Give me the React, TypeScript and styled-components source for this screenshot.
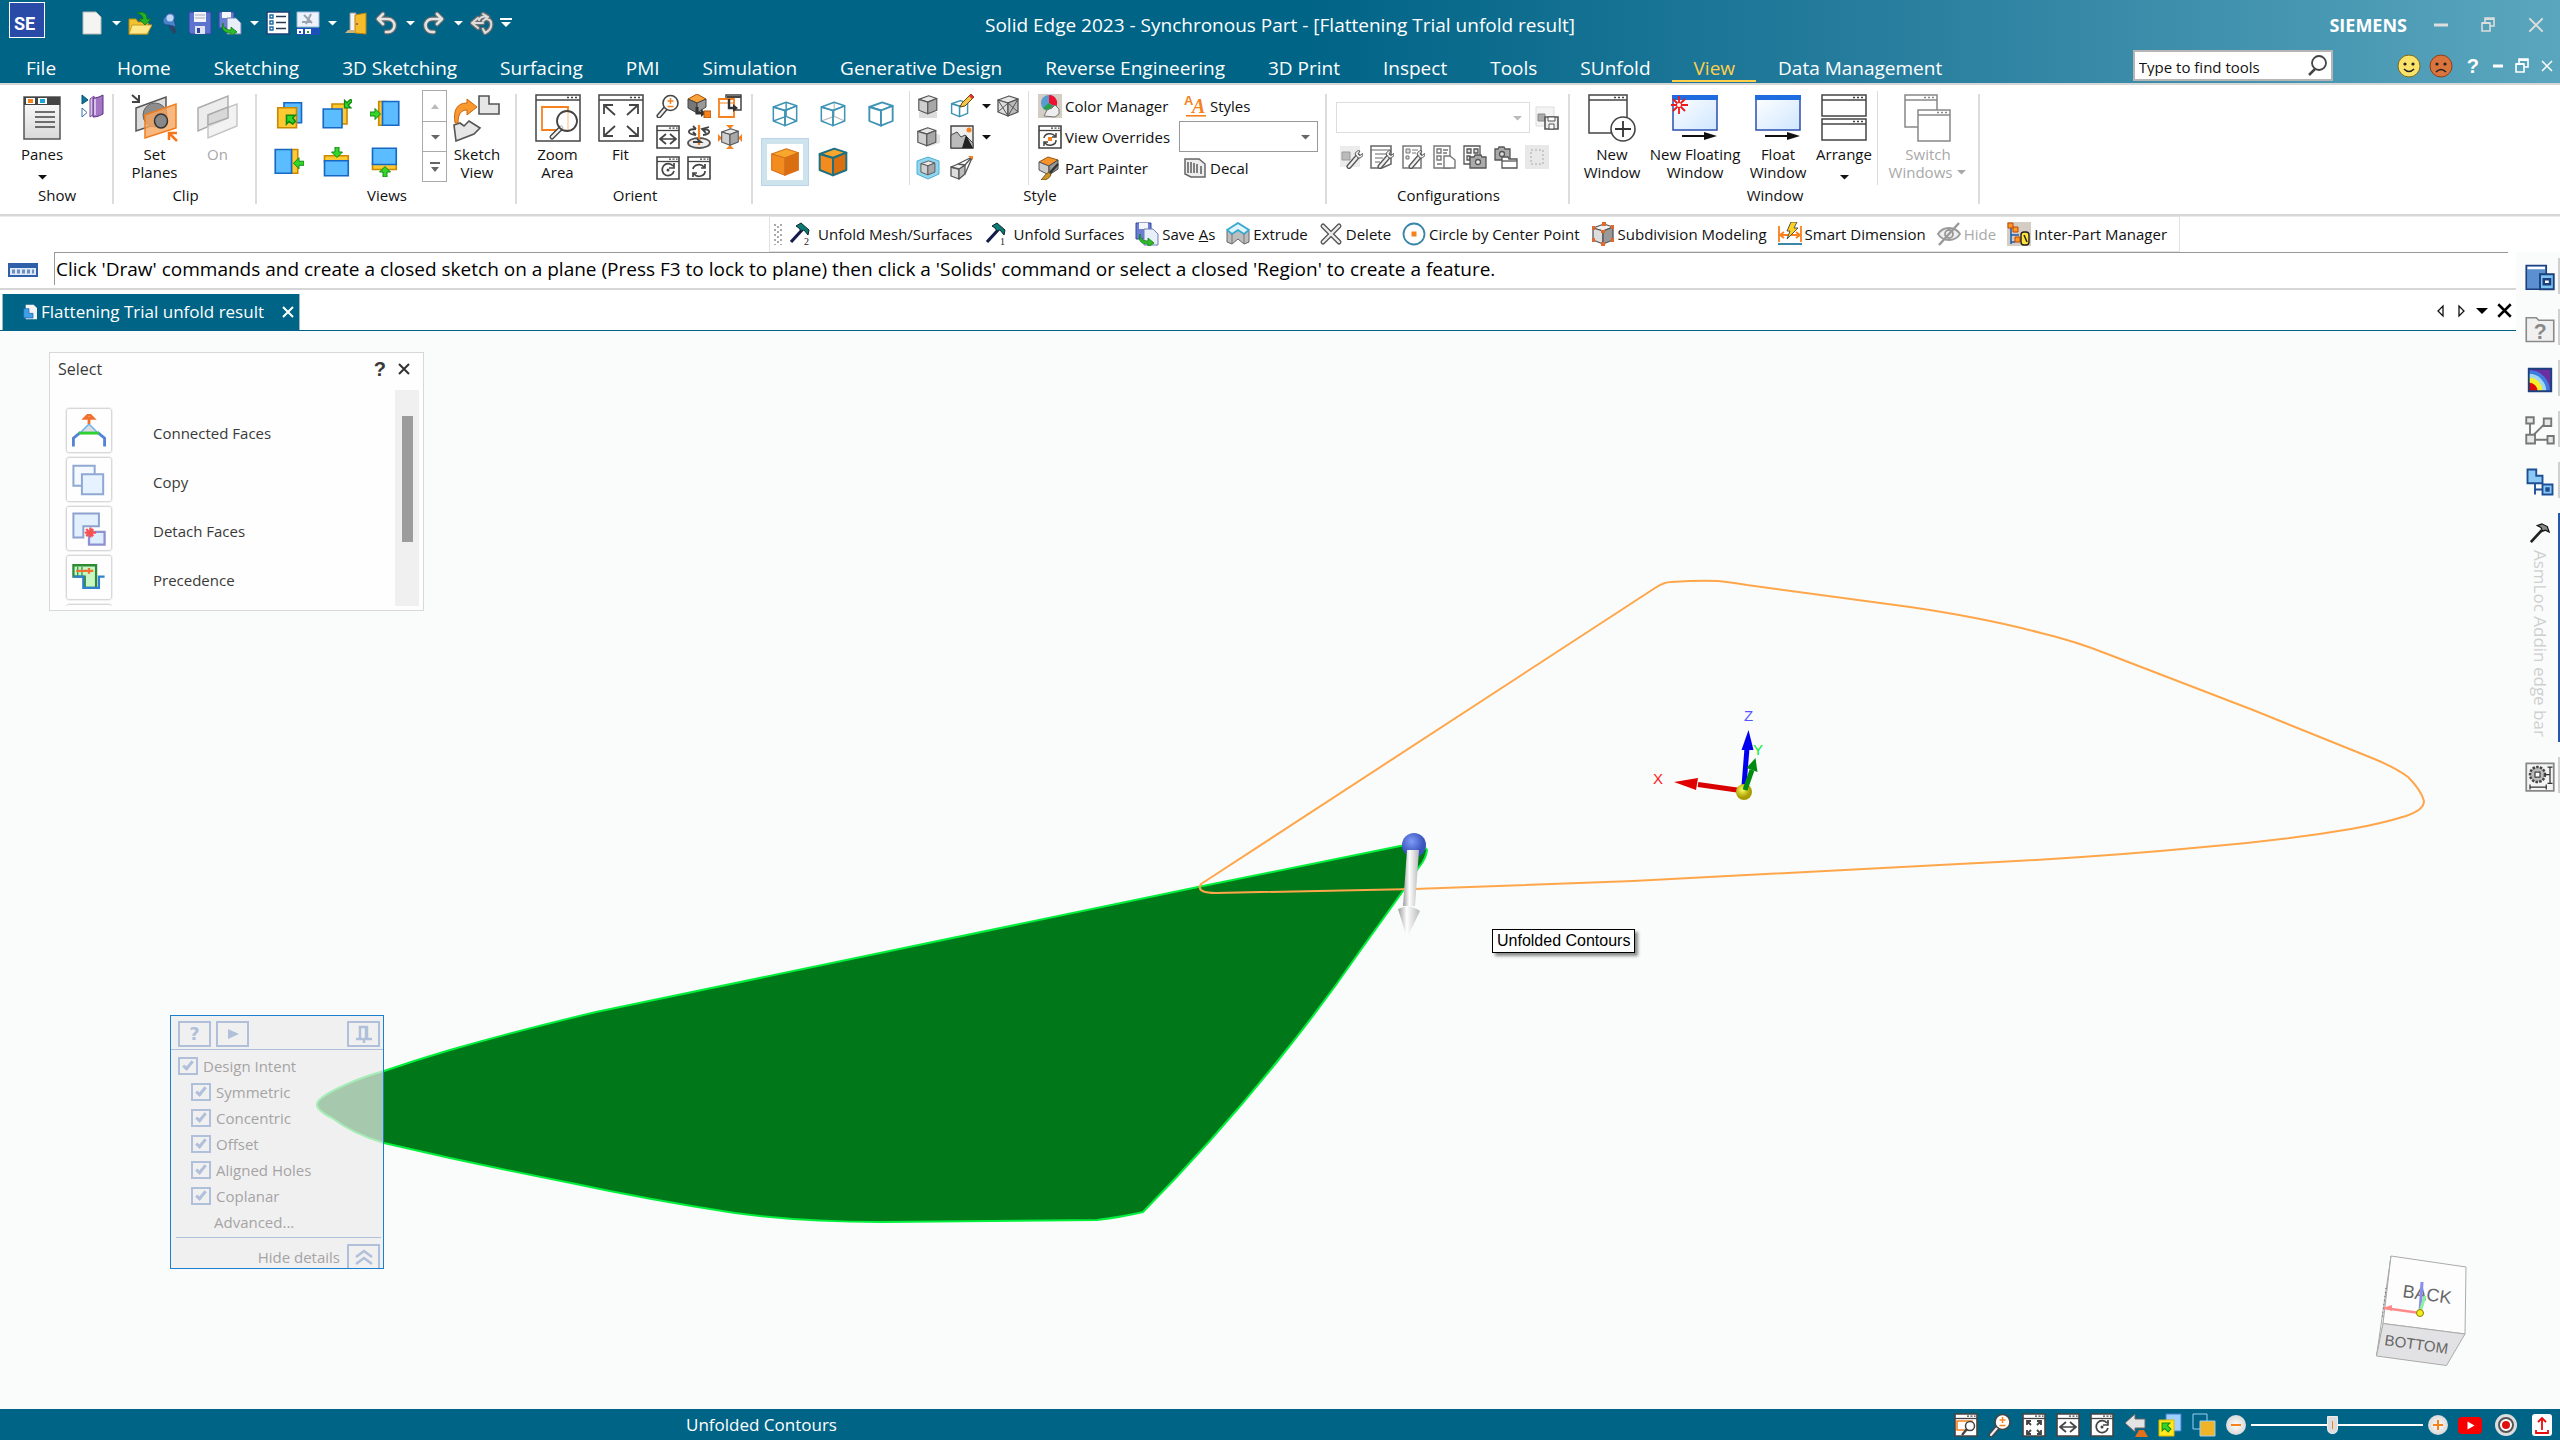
import React from "react";
import styled, { createGlobalStyle, css } from "styled-components";

const TEAL = "#006487";
const LINE = "#d6d6d6";
const UI = `"Open Sans", "Noto Sans", sans-serif`;

const Global = createGlobalStyle`
  *, *::before, *::after { box-sizing: border-box; }
  html, body { margin: 0; background: #fff; }
  body { font-family: ${UI}; font-size: 15px; line-height: 18px; color: #111; }
  button, input, select { font: inherit; color: inherit; margin: 0; }
  button { background: none; border: 0; padding: 0; cursor: pointer; }
  svg { display: block; flex: none; }
`;

/* ---------- icon drawings ---------- */

const Cube = ({ top = "#e8e8e8", left = "#cfcfcf", right = "#a8a8a8", stroke = "#555", w = 1.3 }) => (
  <g stroke={stroke} strokeWidth={w} strokeLinejoin="round">
    <path d="M2 6 13 2l9 3-10 4z" fill={top} />
    <path d="M2 6l10 3v13L2 18z" fill={left} />
    <path d="M12 9l10-4v13l-10 4z" fill={right} />
  </g>
);

const Frame = ({ c = "#444", children }: { c?: string; children?: React.ReactNode }) => (
  <g>
    <path d="M1 1h22v22H1z" fill="#fff" stroke={c} strokeWidth="1.6" />
    <path d="M1 5.500h22" stroke={c} strokeWidth="1.300" />
    <path d="M13 3.200h2M16.500 3.200h2M20 3.200h1.500" stroke={c} strokeWidth="1.200" />
    {children}
  </g>
);

const BigFrame = ({ c = "#444", x = 2, y = 1, w = 44, h = 46 }) => (
  <g stroke={c} fill="#fff">
    <path d={`M${x} ${y}h${w}v${h}h-${w}z`} strokeWidth="1.500" />
    <path d={`M${x} ${y + 5}h${w}`} strokeWidth="1.500" />
    <path d={`M${x + w - 13} ${y + 2.500}h11`} strokeDasharray="2 2" strokeWidth="1.500" />
  </g>
);

const Arrow = ({ r = 0, x = 12, y = 12 }) => (
  <path
    transform={`translate(${x} ${y}) rotate(${r})`}
    d="M-5-2h5v-3.500l5.500 5.500-5.500 5.500V2h-5z"
    fill="#35d62a"
    stroke="#0f8a10"
  />
);

const Wrench = ({ x = 0, y = 0 }) => (
  <g transform={`translate(${x} ${y})`}>
    <path d="M10 21.500 19 11" stroke="#555" strokeWidth="5" strokeLinecap="round" />
    <path d="M10 21.500 19 11" stroke="#eee" strokeWidth="2.400" strokeLinecap="round" />
    <path d="M16 9c1-3 4-4 5-3l-2 3 2 1.500 2.500-2c1 3-2 5-4.500 4.500z" fill="#eee" stroke="#555" />
  </g>
);

const Floppy = (
  <g>
    <path d="M1 1h22v22H3l-2-2z" fill="#5d74cf" stroke="#2f479f" />
    <path d="M6 1h12v10H6z" fill="#f2f4fb" />
    <path d="M7 4h10M7 7h10" stroke="#aab" />
    <path d="M7 15h10v8H7z" fill="#dfe3f3" />
    <path d="M9 17h3v5H9z" fill="#2f479f" />
  </g>
);

const SaveAs = (
  <g>
    <path d="M1 1h15v16H1z" fill="#6a7fd4" stroke="#31469c" />
    <path d="M4 1h9v6H4z" fill="#f5f6fc" />
    <path d="M9 7h9l5 5v11H9z" fill="#e8effa" stroke="#6b7fae" />
    <path d="M5 12c0 5 3 7 8 7v-3l6 5-6 4v-3c-7 0-10-3-8-10z" fill="#2fbb2c" stroke="#0e7d10" strokeWidth=".8" />
  </g>
);

const Hammer = ({ n }: { n: string }) => (
  <g>
    <path d="M3 20 14 8" stroke="#151a4d" strokeWidth="3.200" />
    <path d="M8 4l5-3 8 7-1 5-4-5-3 1-2-3z" fill="#0c7a72" stroke="#06282c" />
    <text x="16" y="23" fontSize="10" fill="#222" fontFamily="Liberation Serif">{n}</text>
  </g>
);

const Lens = (
  <g>
    <path d="M9 15 3 22" stroke="#444" strokeWidth="5" strokeLinecap="round" />
    <path d="M9 15 3 22" stroke="#eee" strokeWidth="2.200" strokeLinecap="round" />
    <circle cx="14.500" cy="9" r="7.500" fill="#fff" stroke="#444" strokeWidth="1.600" />
    <path d="M11.500 7h6M14.500 4v6M11.500 12.500h6" stroke="#f5821f" strokeWidth="1.500" />
  </g>
);

const CameraSheet = ({ flip = false }) => (
  <g stroke="#555" strokeWidth="1.300">
    {flip ? (
      <>
        <path d="M1 4h3l1-2h5l1 2h5v11H1z" fill="#aaa" />
        <circle cx="8" cy="9" r="2.500" fill="#ddd" />
        <path d="M8 12h6l1 2h8v9H8z" fill="#fff" />
        <path d="M8 16h15" />
      </>
    ) : (
      <>
        <path d="M1 1h16v18H1z" fill="#fff" />
        <path d="M4 4h4v4H4zM11 4h4v4h-4zM4 11h3v4H4z" fill="#ddd" />
        <path d="M7 12h4l1-2h6l1 2h4v11H7z" fill="#aaa" />
        <circle cx="15" cy="17" r="2.500" fill="#eee" />
      </>
    )}
  </g>
);

const Undo = (
  <g fill="none" strokeLinecap="round" strokeLinejoin="round">
    <path d="M9 3 4 8l5 5M4.500 8H14a6 6 0 0 1 0 13h-2" stroke="#6d6d6d" strokeWidth="4.800" />
    <path d="M9 3 4 8l5 5M4.500 8H14a6 6 0 0 1 0 13h-2" stroke="#e4e4e4" strokeWidth="2.600" />
  </g>
);

const YB = ({ y, b }: { y: string; b: string }) => (
  <g strokeWidth="1.300">
    <path d={y} fill="#ffc933" stroke="#c98a00" />
    <path d={b} fill="#5bbcff" stroke="#1668c4" />
  </g>
);

const icons: Record<string, React.ReactNode> = {
  doc: <path d="M3 1h13l5 5v17H3z" fill="#f4f4f2" stroke="#b9b9b5" />,
  open: (
    <g>
      <path d="M1 8h7l2 3h10v12H1z" fill="#f2c230" stroke="#b88a10" />
      <path d="M4 14h20l-5 9H1z" fill="#ffe88a" stroke="#c99d20" />
      <path d="M9 2c7-2 10 1 10 6h4l-6 6-6-6h4c0-3-2-5-6-6z" fill="#27b127" stroke="#0d7a12" strokeWidth=".8" />
    </g>
  ),
  pin: (
    <g>
      <path d="M12 13l5 9" stroke="#2b4560" strokeWidth="4" />
      <path d="M12 2c5 0 6 4 4 7l2 7-7-2c-6 1-8-5-4-8 1-2 3-4 5-4z" fill="#4a84c8" stroke="#1f4f8c" />
      <circle cx="12" cy="7" r="3.500" fill="#bcd6f4" />
    </g>
  ),
  save: Floppy,
  saveas: SaveAs,
  list: (
    <g>
      <path d="M1 1h22v22H1z" fill="#fff" stroke="#1f3f77" strokeWidth="1.500" />
      <path d="M4 4h3v3H4zM4 10h3v3H4zM4 16h3v3H4z" fill="#fff" stroke="#1b6aa5" strokeWidth="1.400" />
      <path d="M10 5.500h10M10 11.500h10M10 17.500h10" stroke="#27384f" strokeWidth="1.600" />
    </g>
  ),
  image: (
    <g>
      <path d="M1 1h22v15H1z" fill="#eef3fb" stroke="#9ab5dd" />
      <path d="M8 4l8 8M15 3l-5 10M6 11h9" stroke="#9aa3b0" strokeWidth="2" />
      <path d="M0 17h24v7H0z" fill="#1b50b8" />
      <path d="M1 18h6v5H1zM9 18h6v5H9z" fill="#fff" />
      <path d="M3 20h2v2H3z" fill="#1b50b8" />
      <path d="M11 20h2v2h-2z" fill="#2a9a30" />
    </g>
  ),
  door: (
    <g>
      <path d="M6 2h6v19H6z" fill="#f4f4f4" stroke="#999" />
      <path d="M11 4l11-2v21l-11-1z" fill="#f5bd2b" stroke="#b98410" />
      <path d="M1 22h10v-3H4z" fill="#c9b27d" />
      <circle cx="13" cy="13" r="1" fill="#855" />
    </g>
  ),
  undo: Undo,
  redo: <g transform="translate(24 0) scale(-1 1)">{Undo}</g>,
  repeat: (
    <g fill="none" strokeLinecap="round" strokeLinejoin="round">
      <path d="M8 7 2 12l6 5M3 12h10M13 3l5 3-5 4M9 9c2-4 5-4 9-3M17 8c6 1 6 10-2 14l-2-4" stroke="#6d6d6d" strokeWidth="4.500" />
      <path d="M8 7 2 12l6 5M3 12h10M13 3l5 3-5 4M9 9c2-4 5-4 9-3M17 8c6 1 6 10-2 14l-2-4" stroke="#ddd" strokeWidth="2" />
    </g>
  ),
  panes2: (
    <g>
      <path d="M2 1l6 5-6 4z" fill="#0c7a92" stroke="#0a4f78" />
      <path d="M2 14l5 4.500-5 4.500z" fill="#fff" stroke="#3d6fae" />
      <path d="M10 5l4-3v18l-4 3z" fill="#d8c4e6" stroke="#7a4fa0" />
      <path d="M13 4c4 0 6-1 10-3v19c-4 2-6 3-10 3z" fill="#a276c2" stroke="#5d2f86" />
      <path d="M15 5v16" stroke="#d9c2ea" strokeWidth="2" />
    </g>
  ),
  lens: Lens,
  lookface: (
    <g>
      <path d="M1 5l9-5 9 5-9 4z" fill="#f9a33c" stroke="#a85509" />
      <path d="M1 5l9 4v10l-9-5z" fill="#777" stroke="#444" />
      <path d="M10 9l9-4v8l-9 6z" fill="#999" stroke="#444" />
      <path d="M10 13v6h6" stroke="#333" strokeWidth="3" fill="none" />
      <path d="M14 15l5 4-5 4z" fill="#333" />
      <path d="M17 17h7v7h-7z" fill="#f5821f" stroke="#a85509" />
    </g>
  ),
  prevview: (
    <g fill="#fff">
      <path d="M8 1h15v15H8z" stroke="#444" strokeWidth="1.500" />
      <path d="M9 3h14" stroke="#444" strokeWidth="2" />
      <path d="M1 5h15v18H1z" stroke="#f5821f" strokeWidth="1.800" />
      <path d="M1 9h15" stroke="#f5821f" />
      <path d="M11 5v9h5" stroke="#333" fill="none" strokeWidth="2.400" />
      <path d="M15 10l5 4-5 4z" fill="#333" />
    </g>
  ),
  pan: (
    <Frame>
      <path d="M10 9l-6 5 6 5M14 9l6 5-6 5M4 14h16" stroke="#444" fill="none" strokeWidth="1.700" />
    </Frame>
  ),
  spin: (
    <g fill="none" strokeWidth="1.800">
      <ellipse cx="12" cy="18" rx="11" ry="5" stroke="#555" fill="#eee" />
      <path d="M12 0v20" stroke="#f5821f" strokeWidth="2.200" />
      <path d="M9 10C-1 9 0 4 9 4M9 4l-3-3M9 10l-3-3M15 4c9 0 10 5 1 6M22 2l-7 2 4 4" stroke="#444" />
      <path d="M6 17h8l-4-3" stroke="#444" />
    </g>
  ),
  cubeview: (
    <g>
      <path d="M12 4l4-4H8zM12 20l4 4H8zM4 13 0 9v8zM20 13l4-4v8z" fill="#f5821f" />
      <g transform="translate(2 2) scale(.83)"><Cube /></g>
    </g>
  ),
  rotate: (
    <Frame>
      <path d="M17 10a6 6 0 1 0 1 5M18 7v5h-5" stroke="#444" fill="none" strokeWidth="1.700" />
      <circle cx="12" cy="14" r="1.500" fill="#444" />
    </Frame>
  ),
  refresh: (
    <Frame>
      <path d="M6 13a6 5 0 0 1 11-2M18 8v4h-4M18 15a6 5 0 0 1-11 3M6 21v-4h4" stroke="#444" fill="none" strokeWidth="1.700" />
    </Frame>
  ),
  wire: (
    <g fill="none" stroke="#3f93b5" strokeWidth="1.200">
      <Cube top="none" left="none" right="none" stroke="#3f93b5" />
      <path d="M13 2v12l9 4M13 14 2 18" />
    </g>
  ),
  wirehid: (
    <g fill="none">
      <path d="M13 2v12l9 4M13 14 2 18" stroke="#bbb" />
      <Cube top="none" left="none" right="none" stroke="#3f93b5" />
    </g>
  ),
  wirevis: <Cube top="#fff" left="#fff" right="#fff" stroke="#3f93b5" w={1.600} />,
  shaded: <Cube top="#f9a62c" left="#f28c1e" right="#d96f10" stroke="#d9701a" w={0.800} />,
  shadededge: <Cube top="#f9a62c" left="#f28c1e" right="#d96f10" stroke="#1e6f80" w={1.500} />,
  cubegrey: (
    <g>
      <path d="M3 18h18v6H3z" fill="#ddd" />
      <g transform="translate(1 0) scale(.9)"><Cube /></g>
    </g>
  ),
  cubeshadow: (
    <g>
      <path d="M12 22l12-4v-8l-6-2z" fill="#e2e2e2" />
      <g transform="translate(0 1) scale(.9)"><Cube /></g>
    </g>
  ),
  cubeglow: (
    <g>
      <path d="M1 5 12 1l11 4v13l-11 5L1 18z" fill="#8fd5ee" stroke="#4eb0d4" />
      <g transform="translate(3.500 3.500) scale(.7)"><Cube /></g>
    </g>
  ),
  pencilcube: (
    <g>
      <g transform="translate(0 5) scale(.8)"><Cube top="#fff" left="#fff" right="#fff" stroke="#3f93b5" w={1.800} /></g>
      <path d="M10 13l2-4 9-9 3 3-9 9z" fill="#f7c548" stroke="#6b4a12" />
      <path d="M19 2l2-2 3 3-2 2z" fill="#d33" />
    </g>
  ),
  cubex: (
    <g>
      <Cube left="#ddd" right="#bbb" />
      <path d="M2 6l10 16L22 5M12 9l-10 9M12 9l10 9" stroke="#555" fill="none" />
    </g>
  ),
  scene: (
    <g>
      <path d="M1 1h22v22H1z" fill="#eee" stroke="#444" strokeWidth="1.400" />
      <path d="M1 10l6-3 4 5 4-2 8 8v5H1z" fill="#bbb" stroke="#444" />
      <path d="M12 23l4-13 7 13z" fill="#222" />
      <circle cx="19" cy="5" r="2.500" fill="#f5821f" />
    </g>
  ),
  persp: (
    <g stroke="#555" strokeWidth="1.300" strokeLinejoin="round">
      <path d="M1 11l8 2v10l-8-3z" fill="#ddd" />
      <path d="M9 13l6-4v9l-6 5z" fill="#bbb" />
      <path d="M1 11l7-3 7 1-6 4z" fill="#f2f2f2" />
      <path d="M8 8 22 1 15 9M22 2 15 18" fill="none" />
      <path d="M18 0h5v4z" fill="#f5821f" stroke="none" />
    </g>
  ),
  colormgr: (
    <g>
      <path d="M0 0h24v24H0z" fill="#d4cdc4" />
      <circle cx="11" cy="9" r="8" fill="#5a9bd0" />
      <path d="M11 9V1a8 8 0 0 1 7 12z" fill="#f01030" />
      <path d="M11 9l6 5a8 8 0 0 1-12 0z" fill="#29a04a" />
      <path d="M6 22l3-6 5-2 3-3 4 4v5l-4 3z" fill="#eee" stroke="#777" />
    </g>
  ),
  overrides: (
    <Frame>
      <path d="M6 13a6 5 0 0 1 11-2M18 8v4h-4M18 15a6 5 0 0 1-11 3M6 21v-4h4" stroke="#444" fill="none" strokeWidth="1.500" />
      <path d="M10 12h4v4h-4z" fill="#f5821f" />
    </Frame>
  ),
  painter: (
    <g>
      <path d="M1 6l9-5 10 3-9 6z" fill="#f6932a" stroke="#9a550e" />
      <path d="M1 6l10 4v9L1 14z" fill="#ccc" stroke="#555" />
      <path d="M11 10l9-6v9l-9 6z" fill="#999" stroke="#444" />
      <path d="M20 8 10 19" stroke="#333" strokeWidth="2.600" />
      <path d="M11 16l2 3c-3 5-6 5-10 5 3-3 4-6 8-8z" fill="#c8962c" stroke="#7a5510" />
    </g>
  ),
  styles: (
    <g fill="#f5821f">
      <text x="1" y="11" fontSize="13" fontWeight="700" fontFamily="Liberation Sans">A</text>
      <text x="9" y="19" fontSize="20" fontWeight="700" fontStyle="italic" fontFamily="Liberation Serif">A</text>
      <path d="M3 21h20v1.600H3z" />
    </g>
  ),
  decal: (
    <g stroke="#666" fill="#eee">
      <path d="M2 3h14l6 5v13H8l-6-3z" strokeWidth="1.500" />
      <path d="M5 6v11M8 6v11M11 7v10M14 8v9M18 10v8" strokeWidth="1.600" />
    </g>
  ),
  cfgsave: (
    <g>
      <path d="M1 1h18v19H1z" fill="#f4f4f4" stroke="#ddd" />
      <path d="M3 8h7v7H3z" fill="#aaa" stroke="#888" />
      <path d="M10 11h13v12H10z" fill="#eee" stroke="#555" strokeWidth="1.600" />
      <path d="M13 11h7v4h-7zM14 18h5v5h-5z" fill="#fff" stroke="#555" />
    </g>
  ),
  cfg1: (
    <g>
      <path d="M1 1h20v21H1z" fill="#ececec" />
      <path d="M3 7h8v8H3z" fill="#bbb" stroke="#999" />
      <Wrench />
    </g>
  ),
  cfg2: (
    <g>
      <path d="M1 1h20v18l-9 4H1z" fill="#fff" stroke="#666" strokeWidth="1.500" />
      <path d="M1 5h20M5 9h12M5 13h8M5 17h5" stroke="#666" />
      <Wrench />
    </g>
  ),
  cfg3: (
    <g>
      <path d="M2 1h18v22H2z" fill="#fff" stroke="#777" strokeWidth="1.500" />
      <path d="M5 4h4v4H5zM5 11h3v3H5zM11 5h6M11 8h4" fill="#ddd" stroke="#777" />
      <Wrench />
    </g>
  ),
  cfg4: (
    <g stroke="#777" fill="#fff" strokeWidth="1.400">
      <path d="M2 1h16v22H2z" />
      <path d="M5 4h4v4H5zM5 11h4v4H5zM11 5h5M11 8h4M5 19h5" />
      <path d="M12 11h6l5 4v8H12z" />
    </g>
  ),
  cfg5: <CameraSheet />,
  cfg6: <CameraSheet flip />,
  cfg7: (
    <g>
      <path d="M0 0h24v24H0z" fill="#e8e8e8" />
      <path d="M6 5h12v14H6z" fill="none" stroke="#aaa" strokeDasharray="2 2" />
    </g>
  ),
  h2: <Hammer n="2" />,
  h1: <Hammer n="1" />,
  extrude: (
    <g>
      <path d="M1 9l11-7 11 7v11l-5 2-6-5-6 5-5-2z" fill="#bdbdbd" stroke="#666" />
      <path d="M1 8l11-7 11 7-5 4-6-4-6 4z" fill="#dff4fb" stroke="#35a9cf" strokeWidth="1.800" />
      <path d="M6 12v10M18 12v10" stroke="#777" />
    </g>
  ),
  delete: (
    <g strokeLinecap="round">
      <path d="M4 4l16 16M20 4 4 20" stroke="#555" strokeWidth="5" />
      <path d="M4 4l16 16M20 4 4 20" stroke="#eee" strokeWidth="2.400" />
    </g>
  ),
  circle: (
    <g>
      <circle cx="12" cy="12" r="10.500" fill="#fff" stroke="#3a86a8" strokeWidth="1.800" />
      <path d="M9.500 9.500h5v5h-5z" fill="#f5821f" />
    </g>
  ),
  subdiv: (
    <g>
      <Cube top="#f0f0f0" left="#ddd" right="#999" />
      <path d="M1 4h3v4H1zM11 0h4v4h-4zM20 3h3v4h-3zM1 16h3v4H1zM20 16h3v4h-3zM10 20h4v4h-4zM10 8h4v3h-4z" fill="#e0682a" />
    </g>
  ),
  smart: (
    <g>
      <path d="M1 4v16M23 4v16" stroke="#f5821f" strokeWidth="1.800" />
      <path d="M2 13h20M6 10l-4 3 4 3M18 10l4 3-4 3" stroke="#f5821f" fill="none" strokeWidth="1.800" />
      <path d="M0 22h24" stroke="#3a86a8" strokeWidth="2" />
      <path d="M13 0h6l-3 6h4L9 17l3-8H9z" fill="#ffd21f" stroke="#555" />
    </g>
  ),
  hide: (
    <g fill="none" stroke="#999" strokeWidth="1.800">
      <path d="M1 12c5-8 17-8 22 0-5 8-17 8-22 0z" fill="#eee" />
      <circle cx="12" cy="12" r="4" />
      <path d="M22 1 2 23" strokeWidth="2.400" />
    </g>
  ),
  interpart: (
    <g>
      <path d="M0 0h24v24H0z" fill="#d4cdc4" />
      <path d="M4 6v16M4 13h8M4 20h4" stroke="#1b5aa8" strokeWidth="1.500" />
      <path d="M1 1h5v5H1zM6 5h5v5H6zM8 15h5v5H8z" fill="#ff9a1f" stroke="#c4440a" />
      <rect x="14" y="10" width="8" height="13" rx="3" fill="#ffe23a" stroke="#222" strokeWidth="1.400" />
      <path d="M17 13l3 7" stroke="#222" strokeWidth="1.500" />
    </g>
  ),
  v1: (
    <g strokeWidth="1.300">
      <path d="M8 3h14v16H8z" fill="#5bbcff" stroke="#1668c4" />
      <path d="M3 7h15v16H3z" fill="#ffc933" stroke="#c98a00" />
      <path d="M10 13h7l-2 2 2 3-2 2-3-2-2 2z" fill="#35d62a" stroke="#0f8a10" />
    </g>
  ),
  v2: (
    <g>
      <YB y="M8 4h12v16H8z" b="M1 8h15v15H1z" />
      <path d="M18 7V1l2 2 3-3 1 2-3 3 2 2z" fill="#35d62a" stroke="#0f8a10" />
    </g>
  ),
  v3: <g><YB y="M7 2h5v19H7z" b="M10 2h13v19H10z" /><g transform="translate(4 12) scale(.8)"><Arrow x={0} y={0} /></g></g>,
  v4: <g><YB y="M14 2h5v19h-5z" b="M1 2h13v19H1z" /><g transform="translate(20 13) scale(.8)"><Arrow r={180} x={0} y={0} /></g></g>,
  v5: <g><YB y="M2 7h19v5H2z" b="M2 11h19v12H2z" /><g transform="translate(12 4) scale(.8)"><Arrow r={90} x={0} y={0} /></g></g>,
  v6: <g><YB y="M2 13h19v5H2z" b="M2 1h19v13H2z" /><g transform="translate(12 20) scale(.8)"><Arrow r={270} x={0} y={0} /></g></g>,
  sadd: (
    <g>
      <path d="M8 1h15v17H8z" fill="#9fd0ff" stroke="#3a80d0" />
      <path d="M1 7h15v16H1z" fill="#ffe81f" stroke="#ddb800" />
      <Arrow r={225} x={8} y={14} />
    </g>
  ),
  slayers: (
    <g>
      <path d="M1 1h14v15H1z" fill="none" stroke="#9cd0f5" />
      <path d="M8 8h15v15H8z" fill="#f0b429" stroke="#9cd0f5" />
    </g>
  ),
  sback: (
    <g>
      <path d="M11 1v5h10v9H11v4L1 10z" fill="#e4e4e4" stroke="#666" />
      <path d="M11 24l4-7h5l4 7z" fill="#e0701a" />
    </g>
  ),
  szoom: (
    <Frame>
      <path d="M3 8h15v9H3z" fill="none" stroke="#f5821f" strokeWidth="1.600" />
      <circle cx="16" cy="13" r="4.500" fill="#fff" stroke="#444" strokeWidth="1.500" />
      <path d="M13 16l-5 6" stroke="#444" strokeWidth="2.400" />
    </Frame>
  ),
  sfit: (
    <Frame>
      <path d="M5 12V8h4M15 8h4v4M5 17v4h4M19 17v4h-4M5 8l4 4M19 8l-4 4M5 21l4-4M19 21l-4-4" stroke="#444" fill="none" strokeWidth="1.800" />
    </Frame>
  ),
  yt: (
    <g>
      <rect x="0" y="4" width="24" height="17" rx="4" fill="#f90000" />
      <path d="M9.500 8.500l7 4-7 4z" fill="#fff" />
    </g>
  ),
  rec: (
    <g>
      <circle cx="12" cy="12" r="11" fill="#ddd" />
      <circle cx="12" cy="12" r="7" fill="#fff" stroke="#555" strokeWidth="2" />
      <circle cx="12" cy="12" r="4" fill="#e01010" />
    </g>
  ),
  up: (
    <g>
      <rect x="2" y="1" width="20" height="22" rx="3" fill="#fff" />
      <path d="M12 17V5M8 9l4-4 4 4M6 17v3h12v-3" fill="none" stroke="#e80c0c" strokeWidth="1.800" />
    </g>
  ),
  r1: (
    <g>
      <path d="M1 2h16v19H1z" fill="#5b8fd0" stroke="#1c3f7d" strokeWidth="1.300" />
      <path d="M2 3h14v2H2z" fill="#fff" />
      <path d="M12 9h11v12H12z" fill="#7cc4f2" stroke="#1c3f7d" strokeWidth="1.500" />
      <path d="M15 13h5v4h-5z" fill="#fff" stroke="#1c3f7d" strokeWidth="2" />
    </g>
  ),
  r2: (
    <g>
      <path d="M1 3h8l2 2h12v17H1z" fill="#f0f0f0" stroke="#8a8a8a" strokeWidth="1.300" />
      <text x="7" y="20" fontSize="17" fontWeight="700" fill="#888" fontFamily="Liberation Sans">?</text>
    </g>
  ),
  r3: (
    <g>
      <path d="M3 3h18v18H3z" fill="#6a2fa0" />
      <path d="M3 4a17 17 0 0 1 17 17H3z" fill="#3f7be0" />
      <path d="M3 7a14 14 0 0 1 14 14H3z" fill="#9fd8f0" />
      <path d="M3 10a11 11 0 0 1 11 11H3z" fill="#f8ef2a" />
      <path d="M3 14a7 7 0 0 1 7 7H3z" fill="#e00808" />
      <path d="M3 3h18v18H3z" fill="none" stroke="#1c3f7d" strokeWidth="1.500" />
    </g>
  ),
  r4: (
    <g stroke="#777" strokeWidth="1.500" fill="#e8e8e8">
      <path d="M4 6v11M7 15l8-8M8 19h11" />
      <path d="M1 1h6v5H1zM15 2h6v6h-6zM1 15h7v7H1zM18 16h5v6h-5z" />
    </g>
  ),
  r5: (
    <g stroke="#1c4f96" strokeWidth="1.500">
      <path d="M2 2h7v5h5v6H2z" fill="#8cc8f4" />
      <path d="M8 13v9M8 18h7" fill="none" />
      <path d="M14 14h8v8h-8z" fill="#8cc8f4" />
      <path d="M17 17h2v2h-2z" fill="#1c4f96" />
    </g>
  ),
  r6: (
    <g>
      <path d="M2 22 14 9" stroke="#222" strokeWidth="3" />
      <path d="M9 4l5-2 6 3 2 6-4-2-3 1-2-4z" fill="#888" stroke="#111" strokeWidth="1.300" />
    </g>
  ),
  r7: (
    <g>
      <path d="M1 1h22v22H1z" fill="#f4f4f4" stroke="#888" strokeWidth="1.400" />
      <circle cx="10" cy="10" r="6" fill="#bbb" stroke="#444" strokeWidth="2" strokeDasharray="2 1" />
      <path d="M8 8h4v4H8z" fill="#fff" stroke="#444" />
      <path d="M20 4v13M18 4h4M18 17h4M4 20h13M4 18v4M17 18v4M16 10h4" stroke="#333" />
    </g>
  ),
  cf: (
    <g fill="none">
      <path d="M1 23v-6l5-4M23 23v-6l-5-4" stroke="#5583d8" strokeWidth="2" />
      <path d="M6 13l6-6 6 6z" fill="#ddd" stroke="#6ab0f0" />
      <path d="M5 13.500h14" stroke="#2fd02f" strokeWidth="2" />
      <path d="M12 7V2M9 3l3-3 3 3z" stroke="#f07030" strokeWidth="2" />
    </g>
  ),
  copy: (
    <g fill="#f4f9ff" stroke="#90a8d4" strokeWidth="1.400">
      <path d="M1 2h15v14H1z" />
      <path d="M7 8h15v14H7z" fill="#e6f3ff" />
    </g>
  ),
  detach: (
    <g>
      <path d="M1 1h18v9H8v8H1z" fill="#e3f1ff" stroke="#8ea2d0" strokeWidth="1.400" />
      <path d="M12 14h11v9H12z" fill="#dceeff" stroke="#8f90cf" strokeWidth="1.600" />
      <path d="M13 11v7M9 14.500h8M10 12l5 5M15 12l-5 5" stroke="#f65050" strokeWidth="1.600" />
    </g>
  ),
  preced: (
    <g>
      <path d="M1 3h16v16H9v-8H1z" fill="#c9f7c4" stroke="#2f8a35" strokeWidth="1.600" />
      <path d="M4 4v7M7 4v7" stroke="#2fa05a" />
      <path d="M3 7h12M12 5v4" stroke="#f07030" strokeWidth="1.600" />
      <path d="M1 11h7v8h11v-8h4" stroke="#2f80d0" strokeWidth="1.600" fill="none" />
    </g>
  ),
  tabdoc: (
    <g>
      <path d="M4 1h12l5 5v17H4z" fill="#f4f4f4" />
      <path d="M1 7h8v7h6v7H1z" fill="#3fa0e8" stroke="#1460a8" />
    </g>
  ),
};

const FloatWin = (
  <g>
    <defs>
      <linearGradient id="winFill" x2="1" y2="1"><stop stopColor="#fff" /><stop offset="1" stopColor="#cfe6ff" /></linearGradient>
    </defs>
    <path d="M2 2h44v34H2z" fill="url(#winFill)" stroke="#2a4fb0" strokeWidth="1.500" />
    <path d="M1 1h46v5H1z" fill="#1f6be0" />
    <path d="M11 42h26" stroke="#111" strokeWidth="2" />
    <path d="M33 38l13 4-13 4z" fill="#111" />
  </g>
);

const bigIcons: Record<string, React.ReactNode> = {
  panes: (
    <g>
      <defs>
        <linearGradient id="paneFill" x2="0" y2="1"><stop stopColor="#fff" /><stop offset="1" stopColor="#d8d8d8" /></linearGradient>
      </defs>
      <path d="M6 3h36v42H6z" fill="url(#paneFill)" stroke="#555" strokeWidth="1.500" />
      <path d="M6 3h36v8H6z" fill="#444" />
      <path d="M8 4h9v6H8zM20 4h9v6h-9z" fill="#fff" />
      <path d="M10 5h5v4h-5z" fill="#f5821f" />
      <path d="M22 5h5v4h-5z" fill="#18a8d8" />
      <path d="M17 18h20M17 23h20M17 28h20M17 33h20" stroke="#444" strokeWidth="1.600" />
    </g>
  ),
  setplanes: (
    <g>
      <path d="M5 14 35 3v24L5 37z" fill="#dcdcdc" stroke="#555" strokeWidth="1.500" />
      <circle cx="24" cy="21" r="12" fill="#8d8d8d" stroke="#666" />
      <path d="M14 21 45 10v24L14 44z" fill="#f7a660" fillOpacity=".8" stroke="#f07c1e" strokeWidth="1.500" />
      <ellipse cx="30" cy="27" rx="6.500" ry="7" fill="#888" stroke="#333" strokeWidth="1.500" />
      <path d="M1 1l7 6M8 1v7H1" stroke="#444" strokeWidth="2" fill="none" />
      <path d="M46 47l-7-7M38 46v-7h8" stroke="#f5771a" strokeWidth="2.500" fill="none" />
    </g>
  ),
  on: (
    <g stroke="#aaa" strokeWidth="1.400" fill="#ececec">
      <path d="M4 14 34 2v22L4 37z" />
      <path d="M14 21 43 10v22L14 44z" fillOpacity=".7" stroke="#c4c4c4" />
      <path d="M14 21l20-8v11l-20 7z" fill="#d8d8d8" />
    </g>
  ),
  sketchview: (
    <g>
      <path d="M26 2h10v8h10v10H26z" fill="#e6e6e6" stroke="#555" strokeWidth="1.600" />
      <path d="M1 31l6-2 4 3 5-5 11 7-6 6-18 7z" fill="#e6e6e6" stroke="#555" strokeWidth="1.600" />
      <path d="M2 29C0 16 4 9 14 9V5l10 8-10 8v-5c-6 0-9 4-9 13z" fill="#f9982e" stroke="#c8680c" />
    </g>
  ),
  zoomarea: (
    <g>
      <BigFrame />
      <path d="M8 13h26v23H8z" fill="none" stroke="#f5821f" strokeWidth="1.800" />
      <path d="M27 34 18 43" stroke="#444" strokeWidth="5" strokeLinecap="round" />
      <path d="M27 34 18 43" stroke="#eee" strokeWidth="2.400" strokeLinecap="round" />
      <circle cx="33" cy="27" r="10" fill="#fff" fillOpacity=".7" stroke="#444" strokeWidth="1.800" />
    </g>
  ),
  fit: (
    <g>
      <BigFrame />
      <path d="M7 20V11h9M7 11l11 10M32 11h9v9M41 11 30 21M7 33v9h9M7 42l11-10M32 42h9v-9M41 42 30 32" stroke="#444" fill="none" strokeWidth="1.800" />
    </g>
  ),
  newwin: (
    <g>
      <BigFrame x={1} w={38} h={38} />
      <circle cx="35" cy="35" r="12" fill="#fff" stroke="#444" strokeWidth="1.600" />
      <path d="M27 35h16M35 27v16" stroke="#333" strokeWidth="1.800" />
    </g>
  ),
  floatwin: FloatWin,
  newfloat: (
    <g>
      {FloatWin}
      <path d="M8 2v18M-1 11h18M2 5l12 12M14 5 2 17" stroke="#f01818" strokeWidth="1.800" />
      <circle cx="8" cy="11" r="2" fill="#fff" />
    </g>
  ),
  arrange: (
    <g>
      <BigFrame h={21} />
      <BigFrame y={25} h={21} />
    </g>
  ),
  switch: (
    <g>
      <BigFrame c="#888" x={1} w={32} h={32} />
      <BigFrame c="#888" x={14} y={16} w={32} h={31} />
    </g>
  ),
};

const Icon = ({ name, size = 24 }: { name: string; size?: number }) => (
  <svg width={size} height={size} viewBox="0 0 24 24" aria-hidden="true">{icons[name]}</svg>
);
const BigIcon = ({ name }: { name: string }) => (
  <svg width="48" height="48" viewBox="0 0 48 48" aria-hidden="true">{bigIcons[name]}</svg>
);
const Caret = ({ c = "#111" }) => (
  <svg width="12" height="12" viewBox="0 0 12 12" aria-hidden="true"><path d="M2 4h9L6.500 8.500z" fill={c} /></svg>
);
const Cross = ({ size = 12, c = "#fff", w = 2 }) => (
  <svg width={size} height={size} viewBox="0 0 12 12" aria-hidden="true"><path d="M1 1l10 10M11 1 1 11" stroke={c} strokeWidth={w} /></svg>
);
const Restore = ({ c = "#ddd" }) => (
  <svg width="14" height="16" viewBox="0 0 14 16" aria-hidden="true">
    <path d="M4 5V1h9v8H9M1 6h8v8H1z" fill="none" stroke={c} strokeWidth="1.600" /><path d="M1 6h8M4 2h9" stroke={c} strokeWidth="2" />
  </svg>
);
const Dash = ({ w = 14, c = "#ddd" }) => (
  <svg width={w} height="4" viewBox="0 0 14 4" preserveAspectRatio="none" aria-hidden="true"><path d="M0 2h14" stroke={c} strokeWidth="3" /></svg>
);

/* ---------- page shell ---------- */

const Page = styled.div`
  min-height: 100vh;
  display: flex;
  flex-direction: column;
`;
const Header = styled.header`
  background: linear-gradient(90deg, ${TEAL} 0%, ${TEAL} 51%, #2a7f9f 75%, #5aa6be 100%);
  border-bottom: 2px solid ${LINE};
  color: #fff;
`;
const TitleRow = styled.div`
  display: grid;
  grid-template-columns: 1fr auto 1fr;
  align-items: center;
  height: 50px;
`;
const QuickAccess = styled.div`
  display: flex;
  align-items: center;
  gap: 6px;
  padding: 0 0 4px 9px;
  height: 50px;
`;
const Logo = styled.div`
  width: 36px;
  height: 36px;
  margin: 0 29px 6px 0;
  border: 1px solid #fff;
  background: #2a4aa8;
  font: 700 18px/42px "Roboto", sans-serif;
  padding-left: 4px;
`;
const Tool = styled.button<{ $w?: number }>`
  width: ${(p) => p.$w ?? 24}px;
  display: flex;
  justify-content: center;
  align-items: center;
`;
const Title = styled.h1`
  margin: 0;
  font-size: 19px;
  line-height: 24px;
  font-weight: 400;
`;
const WindowTools = styled.div`
  display: flex;
  justify-content: flex-end;
  align-items: center;
  gap: 33px;
  padding-right: 16px;
`;
const Brand = styled.span`
  font: 700 18px/20px "Open Sans", sans-serif;
  margin-right: -6px;
`;
const TabRow = styled.nav`
  display: flex;
  height: 33px;
  align-items: stretch;
`;
const Tab = styled.button<{ $active?: boolean; $file?: boolean }>`
  padding: 2px ${(p) => (p.$file ? 39 : 21)}px 0 ${(p) => (p.$file ? 26 : 22)}px;
  font-size: 19px;
  line-height: 24px;
  white-space: nowrap;
  position: relative;
  ${(p) => p.$active && css`
    color: #ffcf4a;
    &::after { content: ""; position: absolute; left: 0; right: 0; bottom: 1px; height: 2px; background: #ffcf4a; }
  `}
`;
const TabTools = styled.div`
  margin-left: auto;
  display: flex;
  align-items: center;
  gap: 12px;
  padding: 0 7px 2px 0;
`;
const Search = styled.label`
  width: 200px;
  height: 31px;
  margin-right: 52px;
  background: #fff;
  border: 2px solid #b5b5b5;
  display: flex;
  align-items: center;
  padding: 0 3px 0 4px;
  input { flex: 1; min-width: 0; border: 0; outline: 0; background: none; color: #111; padding: 2px 0 0; }
  input::placeholder { color: #111; opacity: 1; }
`;
const Pair = styled.div`display: flex; gap: 8px;`;

/* ---------- ribbon ---------- */

const Ribbon = styled.section`
  display: flex;
  height: 131px;
  border-bottom: 2px solid ${LINE};
  box-shadow: 0 1px 0 #ececec;
`;
const Group = styled.div<{ $w: number }>`
  width: ${(p) => p.$w}px;
  display: flex;
  flex-direction: column;
  background: linear-gradient(#dcdcdc, #dcdcdc) right 9px / 2px 110px no-repeat;
`;
const GroupBody = styled.div<{ $pad: number }>`
  display: flex;
  height: 100px;
  padding: 5px 0 0 ${(p) => p.$pad}px;
`;
const GroupLabel = styled.div`
  text-align: center;
  line-height: 20px;
`;
const Big = styled.button<{ $w: number; $off?: boolean }>`
  width: ${(p) => p.$w}px;
  padding-top: 4px;
  display: flex;
  flex-direction: column;
  align-items: center;
  color: ${(p) => (p.$off ? "#a8a8a8" : "#111")};
  line-height: 18px;
  white-space: nowrap;
  > span { margin-top: 3px; text-align: center; display: flex; flex-direction: column; align-items: center; }
`;
const Line = styled.span<{ $low?: boolean }>`
  display: flex;
  align-items: center;
  gap: 3px;
  min-height: 18px;
  padding-top: ${(p) => (p.$low ? 8 : 0)}px;
`;
const Cells = styled.div<{ $cols: string; $row: number }>`
  display: grid;
  grid-template-columns: ${(p) => p.$cols};
  grid-auto-rows: ${(p) => p.$row}px;
  align-content: start;
`;
const Cell = styled.button<{ $on?: boolean }>`
  display: grid;
  place-items: center;
  ${(p) => p.$on && css`background: #fff; border: 6px solid #cde4ec; outline: 1px solid #bcd3ee; outline-offset: -1px;`}
`;
const Inner = styled.div<{ $after: number }>`
  width: 1px;
  height: 94px;
  background: #dcdcdc;
  margin: 1px ${(p) => p.$after}px 0 4px;
`;
const Scroller = styled.div`
  width: 25px;
  height: 92px;
  margin: 0 3px 0 13px;
  border: 1px solid #aaa;
  display: grid;
  grid-template-rows: 1fr 1fr 1fr;
  button + button { border-top: 1px solid #aaa; }
`;
const RowButton = styled.button`
  display: flex;
  align-items: center;
  gap: 3px;
  height: 31px;
  white-space: nowrap;
`;
const StyleCol = styled.div`
  display: contents;
  > button:nth-child(even) { padding-left: 4px; }
`;
const Combo = styled.label<{ $w: number; $off?: boolean }>`
  width: ${(p) => p.$w}px;
  height: 31px;
  display: flex;
  align-items: center;
  border: 1px solid ${(p) => (p.$off ? "#ddd" : "#999")};
  padding-right: 6px;
  select { flex: 1; height: 28px; appearance: none; border: 0; background: none; outline: 0; }
`;
const Config = styled.div`display: flex; flex-direction: column; gap: 12px; padding-top: 12px;`;
const ConfigTop = styled.div`display: flex; gap: 5px;`;
const ConfigRow = styled.div`display: flex; gap: 7px; padding-left: 3px;`;

/* ---------- command strip, prompt, document tabs ---------- */

const Strip = styled.div`
  display: flex;
  height: 36px;
  padding-left: 769px;
`;
const StripBox = styled.div`
  display: flex;
  align-items: center;
  gap: 5px;
  padding: 0 12px 0 4px;
  border: 1px solid #e2e2e2;
  white-space: nowrap;
`;
const StripItems = styled.div`
  display: flex;
  align-items: center;
  gap: 11px;
`;
const StripItem = styled.button<{ $off?: boolean; $wide?: boolean }>`
  display: flex;
  align-items: center;
  gap: ${(p) => (p.$wide ? 6 : 3)}px;
  color: ${(p) => (p.$off ? "#aaa" : "#111")};
`;
const Work = styled.div`
  flex: 1;
  display: grid;
  grid-template-columns: minmax(0, 1fr) 44px;
`;
const Left = styled.main`display: flex; flex-direction: column; min-width: 0;`;
const PromptRow = styled.div`
  display: flex;
  height: 38px;
  border-bottom: 2px solid ${LINE};
  padding: 0 8px;
  align-items: flex-start;
`;
const PromptIcon = styled.div`width: 46px; padding-top: 11px;`;
const Prompt = styled.div`
  flex: 1;
  height: 33px;
  border: solid #999;
  border-width: 1px 0 0 1px;
  font-size: 19px;
  line-height: 32px;
  color: #000;
  padding-left: 1px;
  white-space: nowrap;
`;
const DocRow = styled.div`
  display: flex;
  height: 41px;
  padding: 4px 4px 0 2px;
  border-bottom: 1px solid ${TEAL};
  justify-content: space-between;
`;
const DocTab = styled.div`
  width: 298px;
  background: ${TEAL};
  border-left: 1px solid #9bb;
  border-right: 1px solid #9bb;
  color: #fff;
  display: flex;
  align-items: center;
  font-size: 17px;
  line-height: 24px;
  padding: 0 5px 0 20px;
  gap: 2px;
  white-space: nowrap;
  button { margin-left: auto; }
`;
const DocNav = styled.div`display: flex; align-items: center; gap: 9px; padding-bottom: 3px;`;
const Canvas = styled.section`
  flex: 1;
  position: relative;
  background: #fafcfb;
  overflow: hidden;
`;
const Scene = styled.svg`position: absolute; inset: 0; width: 100%; height: 100%;`;

/* ---------- floating panels on the canvas ---------- */

const SelectPanel = styled.aside`
  position: absolute;
  left: 49px;
  top: 21px;
  width: 375px;
  height: 259px;
  background: #fdfefd;
  border: 1px solid #d8d8d8;
  color: #3a3a3a;
  display: flex;
  flex-direction: column;
`;
const SelectHead = styled.div`
  display: flex;
  align-items: center;
  gap: 10px;
  height: 36px;
  padding: 0 13px 4px 8px;
  font-size: 16px;
  span { margin-right: auto; }
`;
const Help = styled.button`
  padding: 0 2px;
  font: 700 20px/22px "Liberation Sans", sans-serif;
`;
const SelectBody = styled.div`
  display: flex;
  justify-content: space-between;
  height: 217px;
  padding: 1px 4px 0 15px;
`;
const SelectList = styled.div`
  padding-top: 17px;
  overflow: hidden;
  display: flex;
  flex-direction: column;
  gap: 2px;
`;
const SelectItem = styled.button`
  display: flex;
  align-items: center;
  flex: none;
  height: 47px;
  gap: 40px;
`;
const ItemLabel = styled.span`padding-top: 4px;`;
const ItemIcon = styled.span`
  width: 48px;
  height: 47px;
  border: 1px solid #f0f0f0;
  box-shadow: inset 0 0 0 1px #d8d8d8;
  border-radius: 4px;
  display: grid;
  place-items: center;
`;
const Track = styled.div`width: 24px; background: #f0f0f0; padding: 26px 6px 0 7px;`;
const Thumb = styled.div`height: 126px; background: #9c9c9c;`;

const BLUE = "#b1c0da";
const Intent = styled.form`
  position: absolute;
  left: 170px;
  top: 684px;
  width: 214px;
  height: 254px;
  border: 1px solid #1b7fd0;
  background: rgba(236, 235, 236, 0.7);
  color: #a4a4a4;
  overflow: hidden;
`;
const IntentHead = styled.div`
  display: flex;
  gap: 5px;
  height: 34px;
  padding: 5px 3px 0 7px;
  border-bottom: 1px solid ${BLUE};
  button:last-child { margin-left: auto; }
`;
const IntentButton = styled.button`
  width: 33px;
  height: 26px;
  border: 2px solid ${BLUE};
  color: ${BLUE};
  display: grid;
  place-items: center;
  font: 700 18px/20px "DejaVu Sans", sans-serif;
`;
const Check = styled.label<{ $in?: boolean }>`
  display: flex;
  align-items: center;
  gap: 5px;
  height: 26px;
  padding-left: ${(p) => (p.$in ? 20 : 7)}px;
  &:first-of-type { margin-top: 3px; }
  input {
    appearance: none;
    width: 20px;
    height: 18px;
    border: 2px solid ${BLUE};
    position: relative;
  }
  input:checked::after {
    content: "";
    position: absolute;
    left: 5px;
    top: 0;
    width: 6px;
    height: 11px;
    border: solid ${BLUE};
    border-width: 0 3px 3px 0;
    transform: rotate(40deg);
  }
`;
const Advanced = styled.button`display: block; height: 26px; padding-left: 43px;`;
const IntentFoot = styled.div`
  margin: 2px 2px 0 5px;
  border-top: 1px solid ${BLUE};
  padding-top: 6px;
  padding-right: 1px;
  display: flex;
  justify-content: flex-end;
  align-items: center;
  gap: 7px;
`;
const Tip = styled.div`
  position: absolute;
  left: 1492px;
  top: 598px;
  padding: 0 4px;
  background: #fff;
  border: 1px solid #000;
  box-shadow: 3px 3px 3px rgba(0, 0, 0, 0.45);
  font: 16px/22px "Liberation Sans", sans-serif;
  color: #000;
`;

/* ---------- right rail and status bar ---------- */

const Rail = styled.nav`
  background: #fafcfb;
  padding-top: 6px;
  display: flex;
  flex-direction: column;
  gap: 15px;
`;
const RailItem = styled.button<{ $on?: boolean }>`
  height: ${(p) => (p.$on ? 229 : 36)}px;
  border-right: 2px solid ${(p) => (p.$on ? "#2757a8" : "#d0d0d0")};
  display: flex;
  flex-direction: column;
  align-items: center;
  justify-content: ${(p) => (p.$on ? "flex-start" : "center")};
  padding: ${(p) => (p.$on ? "9px 0 0 5px" : "4px 0 0 5px")};
  gap: 6px;
  color: #cfcfcf;
  span { writing-mode: vertical-rl; font-size: 17px; line-height: 18px; white-space: nowrap; }
`;
const Status = styled.footer`
  height: 31px;
  background: ${TEAL};
  color: #fff;
  font-size: 17px;
  display: flex;
  align-items: center;
  justify-content: space-between;
  padding: 1px 6px 0 686px;
`;
const StatusTools = styled.div<{ $gap: number }>`
  display: flex;
  align-items: center;
  gap: ${(p) => p.$gap}px;
`;
const Zoom = styled.div`
  display: flex;
  align-items: center;
  gap: 5px;
  input {
    width: 172px;
    height: 24px;
    appearance: none;
    background: linear-gradient(#fff, #fff) 0 11px / 100% 2px no-repeat;
  }
  input::-webkit-slider-thumb {
    appearance: none;
    width: 11px;
    height: 18px;
    background: linear-gradient(#f5821f, #f5821f) center / 1px 8px no-repeat, #ddd;
    border: 1px solid #eee;
    border-radius: 1px 1px 6px 6px;
  }
`;
const Round = styled.button`
  width: 20px;
  height: 20px;
  border-radius: 50%;
  background: radial-gradient(#fff, #c8c8c8);
  display: grid;
  place-items: center;
`;

const tabs = ["Home", "Sketching", "3D Sketching", "Surfacing", "PMI", "Simulation", "Generative Design", "Reverse Engineering", "3D Print", "Inspect", "Tools", "SUnfold", "View", "Data Management"];

const strip: [string, React.ReactNode, boolean?][] = [
  ["h2", "Unfold Mesh/Surfaces"],
  ["h1", "Unfold Surfaces"],
  ["saveas", <span key="s">Save <u>A</u>s</span>],
  ["extrude", "Extrude"],
  ["delete", "Delete"],
  ["circle", "Circle by Center Point"],
  ["subdiv", "Subdivision Modeling"],
  ["smart", "Smart Dimension"],
  ["hide", "Hide", true],
  ["interpart", "Inter-Part Manager"],
];

const BigButton = ({ icon, lines, w, off, caret, inlineCaret }: { icon: string; lines: string[]; w: number; off?: boolean; caret?: boolean; inlineCaret?: boolean }) => (
  <Big $w={w} $off={off} disabled={off}>
    <BigIcon name={icon} />
    <span>
      {lines.map((l, i) => (
        <Line key={l}>{l}{inlineCaret && i === lines.length - 1 && <Caret c="#a8a8a8" />}</Line>
      ))}
      {caret && <Line $low><Caret /></Line>}
    </span>
  </Big>
);

const QuickBar = () => {
  const seq = ["doc", "|", "open", "pin", "save", "saveas", "|", "list", "image", "|", "door", "undo", "|", "redo", "|", "repeat"];
  return (
    <QuickAccess>
      <Logo>SE</Logo>
      {seq.map((s, i) => s === "|"
        ? <Tool key={i} $w={12} aria-label="More"><Caret c="#fff" /></Tool>
        : <Tool key={i} aria-label={s}><Icon name={s} /></Tool>)}
      <Tool $w={12} aria-label="Customize">
        <svg width="12" height="14" viewBox="0 0 12 14"><path d="M0 2h12v2H0zM1 6h10l-5 5z" fill="#fff" /></svg>
      </Tool>
    </QuickAccess>
  );
};

const Face = ({ sad = false }) => (
  <svg width="24" height="24" viewBox="0 0 24 24" aria-hidden="true">
    <circle cx="12" cy="12" r="11" fill={sad ? "#d9743c" : "#fbe26a"} stroke={sad ? "#8d4018" : "#7a6a20"} />
    <circle cx="8" cy="10" r="1.600" fill="#222" /><circle cx="16" cy="10" r="1.600" fill="#222" />
    <path d={sad ? "M7 18q5-5 10 0" : "M7 15q5 5 10 0"} stroke="#222" strokeWidth="1.600" fill="none" />
  </svg>
);

const Drawing = () => (
  <Scene viewBox="0 331 2516 1078" role="img" aria-label="Part view">
    <defs>
      <radialGradient id="ball" cx=".4" cy=".35"><stop stopColor="#7f9cf8" /><stop offset="1" stopColor="#3b55bd" /></radialGradient>
      <radialGradient id="gold" cx=".4" cy=".35"><stop stopColor="#ffff60" /><stop offset="1" stopColor="#a89c00" /></radialGradient>
      <linearGradient id="rod"><stop stopColor="#9c9c9c" /><stop offset=".4" stopColor="#fff" /><stop offset="1" stopColor="#b8b8b8" /></linearGradient>
    </defs>
    <path
      d="M1427 850 Q1426 859 1419 867 L1403 891 L1360 951 Q1322 1006 1280 1058 Q1216 1138 1143 1212 Q1122 1217 1097 1220 L882 1222 Q800 1222 735 1213 Q650 1200 571 1183 Q510 1171 450 1158 L384 1143 Q353 1134 332 1118 Q316 1110 317 1104 Q318 1097 345 1085 Q362 1077 384 1071 Q416 1060 450 1050 Q520 1030 596 1012 L1198 887 L1410 844 L1424 846 Z"
      fill="#00781a" stroke="#00f03c" strokeWidth="2" strokeLinejoin="round"
    />
    <path
      d="M1201 884 L1655 588 Q1664 582 1671 582 Q1700 580 1718 581 Q1736 583 1747 585 L1910 607 Q1985 618 2041 633 Q2075 641 2110 655 L2253 710 L2367 756 Q2395 767 2408 777 Q2421 790 2424 801 Q2424 810 2406 816 Q2380 824 2351 829 Q2280 841 2204 847 Q2090 858 1959 864 L1633 881 L1414 889 L1216 893 Q1198 893 1200 886 Z"
      fill="none" stroke="#ffa64a" strokeWidth="2"
    />
    <circle cx="1414" cy="845" r="12" fill="url(#ball)" />
    <path d="M1407 850h12l-4 56h-12z" fill="url(#rod)" />
    <path d="M1398 909q11-6 22 2l-13 27z" fill="url(#rod)" />
    <path d="M1744 791l-46-6.500" stroke="#d80000" strokeWidth="5" />
    <path d="M1674 782l24-4-2 12z" fill="#e00000" />
    <path d="M1744 786l3-38" stroke="#0000f0" strokeWidth="5" />
    <path d="M1748.500 730l5 20h-12z" fill="#0000f0" />
    <circle cx="1744" cy="792" r="8" fill="url(#gold)" />
    <path d="M1745 790l7-20" stroke="#008a10" strokeWidth="5" />
    <path d="M1755.500 758l2 14-11-4z" fill="#008a10" />
    <g fontFamily="Liberation Sans" fontSize="15">
      <text x="1653" y="784" fill="#ff2020">X</text>
      <text x="1744" y="721" fill="#5555ff">Z</text>
      <text x="1753" y="755" fill="#00f020">Y</text>
    </g>
    <g stroke="#aaa" fill="#fdfdfd" strokeLinejoin="round">
      <path d="M2391 1256l-8 68-6.500 32z" />
      <path d="M2391 1256l75 11-1 67-82-10.500z" />
      <path d="M2383 1323.500l82 10.500-18.500 31.500-70-9.500z" fill="#e2e2e4" />
    </g>
    <path d="M2386 1288l-4 30" stroke="#666" strokeDasharray="1 3" />
    <g fontFamily="Liberation Sans" fill="#666">
      <text transform="translate(2402 1297) rotate(8)" fontSize="18">BACK</text>
      <text transform="translate(2384 1345) rotate(8)" fontSize="15">BOTTOM</text>
    </g>
    <path d="M2420 1312l2-30" stroke="#8c8cf0" strokeWidth="3" />
    <path d="M2420 1312l5-16" stroke="#8cf09c" strokeWidth="3" />
    <path d="M2420 1313l-36-5" stroke="#ff8a8a" strokeWidth="2.500" />
    <path d="M2383 1308l9-3v6z" fill="#ff8a8a" />
    <circle cx="2420" cy="1313" r="3.500" fill="#f4ea20" stroke="#8a8200" />
  </Scene>
);

export default function App() {
  return (
    <Page>
      <Global />
      <Header>
        <TitleRow>
          <QuickBar />
          <Title>Solid Edge 2023 - Synchronous Part - [Flattening Trial unfold result]</Title>
          <WindowTools>
            <Brand>SIEMENS</Brand>
            <button aria-label="Minimize"><Dash /></button>
            <button aria-label="Restore"><Restore /></button>
            <button aria-label="Close"><Cross size={16} c="#ddd" w={1.500} /></button>
          </WindowTools>
        </TitleRow>
        <TabRow>
          <Tab $file>File</Tab>
          {tabs.map((t) => <Tab key={t} $active={t === "View"}>{t}</Tab>)}
          <TabTools>
            <Search>
              <input aria-label="Type to find tools" placeholder="Type to find tools" />
              <svg width="22" height="24" viewBox="0 0 22 24" aria-hidden="true">
                <circle cx="13" cy="9" r="7" fill="none" stroke="#444" strokeWidth="1.800" /><path d="M9 15l-6 6" stroke="#444" strokeWidth="2.500" />
              </svg>
            </Search>
            <Pair>
              <button aria-label="Like"><Face /></button>
              <button aria-label="Dislike"><Face sad /></button>
            </Pair>
            <Help>?</Help>
            <button aria-label="Minimize document"><Dash w={10} c="#fff" /></button>
            <button aria-label="Restore document"><Restore c="#fff" /></button>
            <button aria-label="Close document"><Cross c="#fff" w={1.500} /></button>
          </TabTools>
        </TabRow>
      </Header>

      <Ribbon>
        <Group $w={114}>
          <GroupBody $pad={12}>
            <BigButton icon="panes" lines={["Panes"]} w={60} caret />
            <Cells $cols="40px" $row={31}><Cell aria-label="Reflective plane"><Icon name="panes2" /></Cell></Cells>
          </GroupBody>
          <GroupLabel>Show</GroupLabel>
        </Group>
        <Group $w={143}>
          <GroupBody $pad={9}>
            <BigButton icon="setplanes" lines={["Set", "Planes"]} w={63} />
            <BigButton icon="on" lines={["On"]} w={63} off />
          </GroupBody>
          <GroupLabel>Clip</GroupLabel>
        </Group>
        <Group $w={260}>
          <GroupBody $pad={8}>
            <Cells $cols="48px 48px 48px" $row={48}>
              {["v1", "v2", "v3", "v4", "v5", "v6"].map((v) => <Cell key={v} aria-label={v}><Icon name={v} size={30} /></Cell>)}
            </Cells>
            <Scroller>
              <Cell aria-label="Up"><svg width="12" height="12" viewBox="0 0 12 12"><path d="M2 9h8L6 4z" fill="#bbb" /></svg></Cell>
              <Cell aria-label="Down"><Caret c="#666" /></Cell>
              <Cell aria-label="More"><svg width="12" height="12" viewBox="0 0 12 12"><path d="M1 1h10v2H1zM2 6h8l-4 5z" fill="#666" /></svg></Cell>
            </Scroller>
            <BigButton icon="sketchview" lines={["Sketch", "View"]} w={54} />
          </GroupBody>
          <GroupLabel>Views</GroupLabel>
        </Group>
        <Group $w={236}>
          <GroupBody $pad={9}>
            <BigButton icon="zoomarea" lines={["Zoom", "Area"]} w={63} />
            <BigButton icon="fit" lines={["Fit"]} w={63} />
            <Cells $cols="31px 31px 31px" $row={31}>
              {["lens", "lookface", "prevview", "pan", "spin", "cubeview", "rotate", "refresh"].map((v) => <Cell key={v} aria-label={v}><Icon name={v} /></Cell>)}
            </Cells>
          </GroupBody>
          <GroupLabel>Orient</GroupLabel>
        </Group>
        <Group $w={574}>
          <GroupBody $pad={8}>
            <Cells $cols="48px 48px 48px" $row={48}>
              {["wire", "wirehid", "wirevis"].map((v) => <Cell key={v} aria-label={v}><Icon name={v} size={28} /></Cell>)}
              <Cell $on aria-label="Shaded"><Icon name="shaded" size={32} /></Cell>
              <Cell aria-label="Shaded with edges"><Icon name="shadededge" size={32} /></Cell>
            </Cells>
            <Inner $after={2} />
            <Cells $cols="32px 36px 12px 32px" $row={31}>
              <Cell aria-label="Floor reflection"><Icon name="cubegrey" /></Cell>
              <Cell aria-label="Sketch edges"><Icon name="pencilcube" /></Cell>
              <Cell aria-label="More"><Caret /></Cell>
              <Cell aria-label="Facets"><Icon name="cubex" /></Cell>
              <Cell aria-label="Shadow"><Icon name="cubeshadow" /></Cell>
              <Cell aria-label="Background"><Icon name="scene" /></Cell>
              <Cell aria-label="More"><Caret /></Cell>
              <span />
              <Cell aria-label="Highlight"><Icon name="cubeglow" /></Cell>
              <Cell aria-label="Perspective"><Icon name="persp" /></Cell>
            </Cells>
            <Inner $after={9} />
            <Cells $cols="141px 139px" $row={31}>
              <StyleCol>
                <RowButton><Icon name="colormgr" />Color Manager</RowButton>
                <RowButton><Icon name="styles" />Styles</RowButton>
                <RowButton><Icon name="overrides" />View Overrides</RowButton>
                <Combo $w={139}><select aria-label="Style"><option></option></select><Caret c="#666" /></Combo>
                <RowButton><Icon name="painter" />Part Painter</RowButton>
                <RowButton><Icon name="decal" />Decal</RowButton>
              </StyleCol>
            </Cells>
          </GroupBody>
          <GroupLabel>Style</GroupLabel>
        </Group>
        <Group $w={243}>
          <GroupBody $pad={9}>
            <Config>
              <ConfigTop>
                <Combo $w={194} $off><select aria-label="Configuration" disabled><option></option></select><Caret c="#bbb" /></Combo>
                <Cell aria-label="Save configuration"><Icon name="cfgsave" /></Cell>
              </ConfigTop>
              <ConfigRow>
                {[1, 2, 3, 4, 5, 6, 7].map((n) => <Cell key={n} aria-label={`Configuration tool ${n}`}><Icon name={`cfg${n}`} /></Cell>)}
              </ConfigRow>
            </Config>
          </GroupBody>
          <GroupLabel>Configurations</GroupLabel>
        </Group>
        <Group $w={410}>
          <GroupBody $pad={5}>
            <BigButton icon="newwin" lines={["New", "Window"]} w={74} />
            <BigButton icon="newfloat" lines={["New Floating", "Window"]} w={92} />
            <BigButton icon="floatwin" lines={["Float", "Window"]} w={74} />
            <BigButton icon="arrange" lines={["Arrange"]} w={58} caret />
            <Inner $after={6} />
            <BigButton icon="switch" lines={["Switch", "Windows"]} w={88} off inlineCaret />
          </GroupBody>
          <GroupLabel>Window</GroupLabel>
        </Group>
      </Ribbon>

      <Strip>
        <StripBox>
          <svg width="9" height="22" viewBox="0 0 9 22" aria-hidden="true">
            <path d="M1 1v22M7 1v22" stroke="#aaa" strokeWidth="2" strokeDasharray="2 3" /><path d="M4 3v20" stroke="#aaa" strokeWidth="2" strokeDasharray="2 3" />
          </svg>
          <StripItems>
            {strip.map(([icon, label, off], i) => (
              <StripItem key={icon} $off={off} $wide={i < 2} disabled={off}><Icon name={icon} />{label}</StripItem>
            ))}
          </StripItems>
        </StripBox>
      </Strip>

      <Work>
        <Left>
          <PromptRow>
            <PromptIcon>
              <svg width="30" height="14" viewBox="0 0 30 14" aria-hidden="true">
                <path d="M0 0h30v14H0z" fill="#2f5fa8" /><path d="M2 5h26v7H2z" fill="#dfe9f8" /><path d="M4 8.500h22" stroke="#6d8fc4" strokeWidth="4" strokeDasharray="3 2" />
              </svg>
            </PromptIcon>
            <Prompt>Click 'Draw' commands and create a closed sketch on a plane (Press F3 to lock to plane) then click a 'Solids' command or select a closed 'Region' to create a feature.</Prompt>
          </PromptRow>
          <DocRow>
            <DocTab>
              <Icon name="tabdoc" size={16} />Flattening Trial unfold result
              <button aria-label="Close tab"><Cross /></button>
            </DocTab>
            <DocNav>
              <button aria-label="Previous"><svg width="12" height="14" viewBox="0 0 12 14"><path d="M9 2v10L4 7z" fill="none" stroke="#111" strokeWidth="1.300" /></svg></button>
              <button aria-label="Next"><svg width="12" height="14" viewBox="0 0 12 14"><path d="M4 2v10l5-5z" fill="none" stroke="#111" strokeWidth="1.300" /></svg></button>
              <button aria-label="Documents"><svg width="12" height="12" viewBox="0 0 12 12"><path d="M0 3h12L6 9z" fill="#000" /></svg></button>
              <button aria-label="Close document"><Cross size={15} c="#000" w={2} /></button>
            </DocNav>
          </DocRow>
          <Canvas>
            <Drawing />
            <SelectPanel>
              <SelectHead>
                <span>Select</span>
                <Help>?</Help>
                <button aria-label="Close panel"><Cross c="#333" w={2} /></button>
              </SelectHead>
              <SelectBody>
                <SelectList>
                  {[["cf", "Connected Faces"], ["copy", "Copy"], ["detach", "Detach Faces"], ["preced", "Precedence"]].map(([i, l]) => (
                    <SelectItem key={i}><ItemIcon><Icon name={i} size={34} /></ItemIcon><ItemLabel>{l}</ItemLabel></SelectItem>
                  ))}
                  <SelectItem aria-label="More options"><ItemIcon /></SelectItem>
                </SelectList>
                <Track><Thumb /></Track>
              </SelectBody>
            </SelectPanel>
            <Intent>
              <IntentHead>
                <IntentButton type="button">?</IntentButton>
                <IntentButton type="button" aria-label="Play"><svg width="12" height="12" viewBox="0 0 12 12"><path d="M1 1l11 5-11 5z" fill={BLUE} /></svg></IntentButton>
                <IntentButton type="button" aria-label="Pin"><svg width="16" height="18" viewBox="0 0 16 18"><path d="M4 14V2h7v12M10 2v12M0 14h16M8 14v4" fill="none" stroke={BLUE} strokeWidth="2.500" /></svg></IntentButton>
              </IntentHead>
              <Check><input type="checkbox" defaultChecked />Design Intent</Check>
              {["Symmetric", "Concentric", "Offset", "Aligned Holes", "Coplanar"].map((l) => (
                <Check $in key={l}><input type="checkbox" defaultChecked />{l}</Check>
              ))}
              <Advanced type="button">Advanced...</Advanced>
              <IntentFoot>
                Hide details
                <IntentButton type="button" aria-label="Collapse"><svg width="18" height="16" viewBox="0 0 18 16"><path d="M1 8l8-6 8 6M1 15l8-6 8 6" fill="none" stroke={BLUE} strokeWidth="2.500" /></svg></IntentButton>
              </IntentFoot>
            </Intent>
            <Tip role="tooltip">Unfolded Contours</Tip>
          </Canvas>
        </Left>
        <Rail>
          {["r1", "r2", "r3", "r4", "r5"].map((r) => <RailItem key={r} aria-label={r}><Icon name={r} size={30} /></RailItem>)}
          <RailItem $on><Icon name="r6" size={22} /><span>AsmLoc Addin edge bar</span></RailItem>
          <RailItem aria-label="Sensors"><Icon name="r7" size={30} /></RailItem>
        </Rail>
      </Work>

      <Status>
        <span>Unfolded Contours</span>
        <StatusTools $gap={10}>
          {["szoom", "lens", "sfit", "pan", "rotate", "sback", "sadd", "slayers"].map((s) => <Tool key={s} aria-label={s}><Icon name={s} /></Tool>)}
          <Zoom>
            <Round aria-label="Zoom out"><svg width="12" height="12" viewBox="0 0 12 12"><path d="M1 6h10" stroke="#f5821f" strokeWidth="2" /></svg></Round>
            <input type="range" aria-label="Zoom" defaultValue={47} />
            <Round aria-label="Zoom in"><svg width="12" height="12" viewBox="0 0 12 12"><path d="M1 6h10M6 1v10" stroke="#f5821f" strokeWidth="2" /></svg></Round>
          </Zoom>
          <StatusTools $gap={12}>
            {["yt", "rec", "up"].map((s) => <Tool key={s} aria-label={s}><Icon name={s} /></Tool>)}
          </StatusTools>
        </StatusTools>
      </Status>
    </Page>
  );
}
